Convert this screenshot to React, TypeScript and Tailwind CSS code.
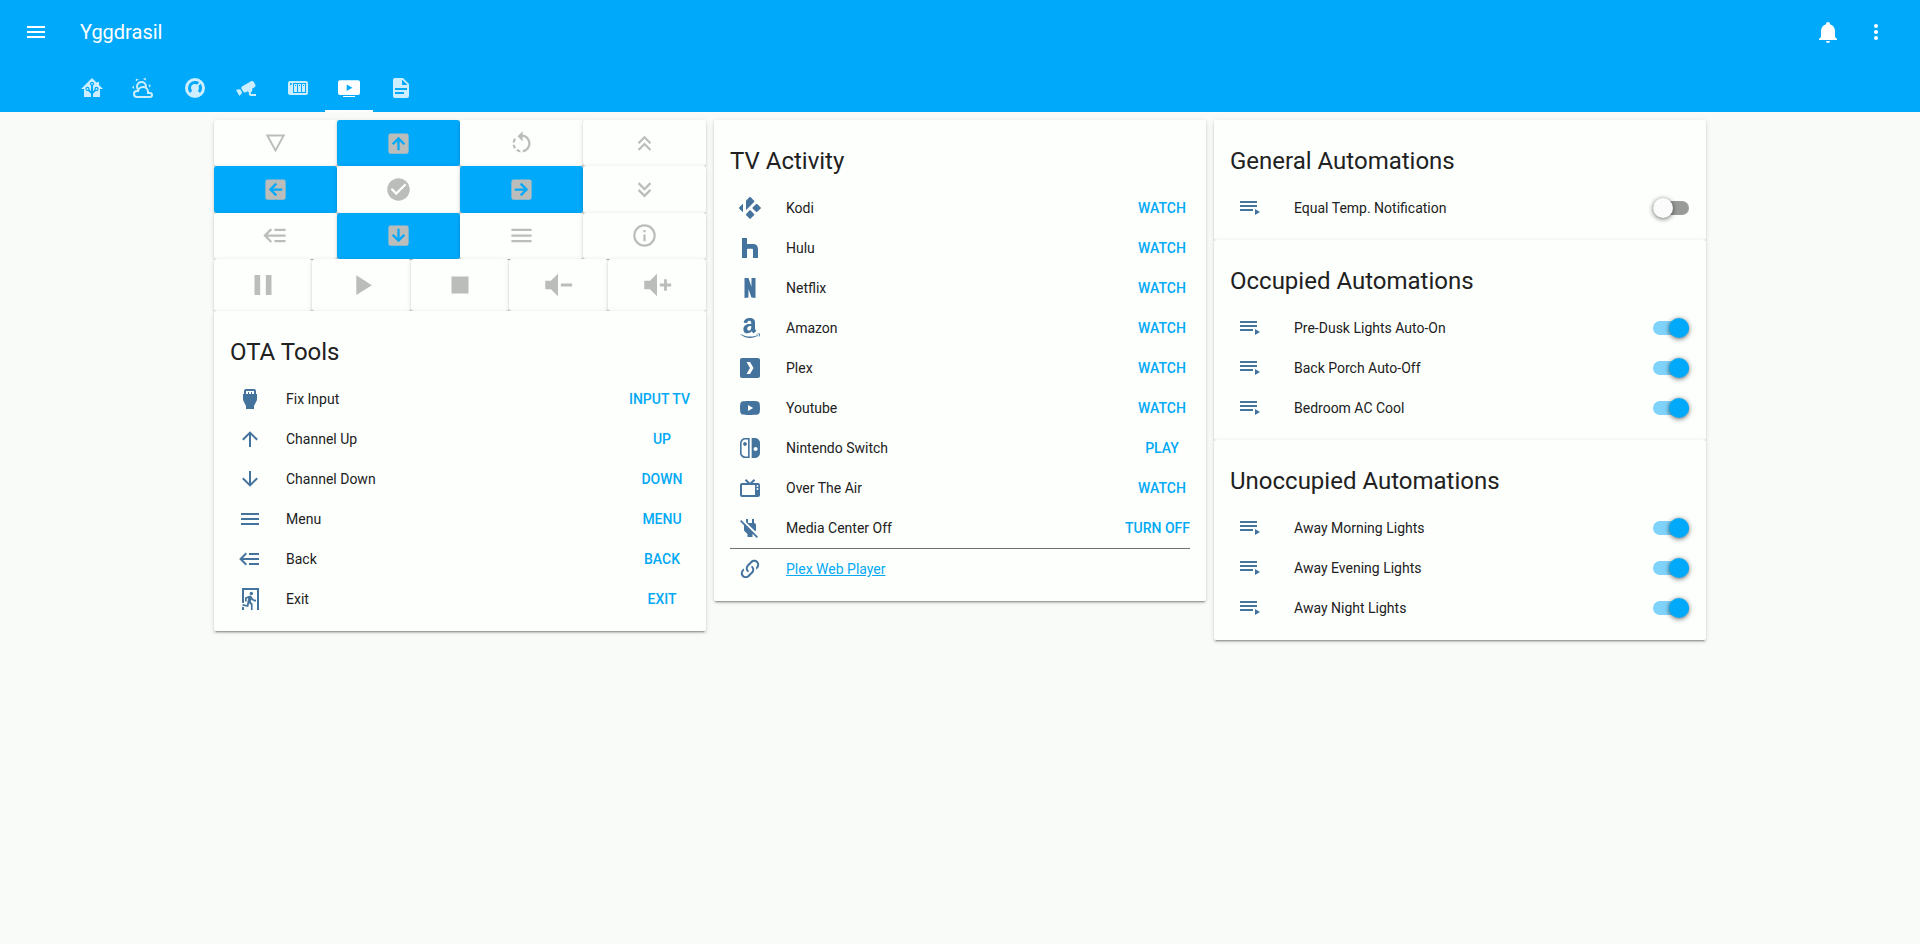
import React, { useId } from "react";

const ICONS = {
  menu: "M3,6H21V8H3V6M3,11H21V13H3V11M3,16H21V18H3V16Z",
  bell: "M21,19V20H3V19L5,17V11C5,7.9 7.03,5.17 10,4.29C10,4.19 10,4.1 10,4A2,2 0 0,1 12,2A2,2 0 0,1 14,4C14,4.1 14,4.19 14,4.29C16.97,5.17 19,7.9 19,11V17L21,19M14,21A2,2 0 0,1 12,23A2,2 0 0,1 10,21",
  dots: "M12,16A2,2 0 0,1 14,18A2,2 0 0,1 12,20A2,2 0 0,1 10,18A2,2 0 0,1 12,16M12,10A2,2 0 0,1 14,12A2,2 0 0,1 12,14A2,2 0 0,1 10,12A2,2 0 0,1 12,10M12,4A2,2 0 0,1 14,6A2,2 0 0,1 12,8A2,2 0 0,1 10,6A2,2 0 0,1 12,4Z",
  home: "M21.8,13H20V21H13V17.67L15.79,14.88L16.5,15C17.66,15 18.6,14.06 18.6,12.9C18.6,11.74 17.66,10.8 16.5,10.8A2.1,2.1 0 0,0 14.4,12.9L14.5,13.61L13,15.13V9.65C13.66,9.29 14.1,8.6 14.1,7.8A2.1,2.1 0 0,0 12,5.7A2.1,2.1 0 0,0 9.9,7.8C9.9,8.6 10.34,9.29 11,9.65V15.13L9.5,13.61L9.6,12.9A2.1,2.1 0 0,0 7.5,10.8A2.1,2.1 0 0,0 5.4,12.9A2.1,2.1 0 0,0 7.5,15L8.21,14.88L11,17.67V21H4V13H2.25C1.83,13 1.42,13 1.42,12.79C1.43,12.57 1.85,12.15 2.28,11.72L11,3C11.33,2.67 11.67,2.33 12,2.33C12.33,2.33 12.67,2.67 13,3L17,7V6H19V9L21.78,11.78C22.18,12.18 22.59,12.59 22.6,12.8C22.6,13 22.2,13 21.8,13M7.5,12A0.9,0.9 0 0,1 8.4,12.9A0.9,0.9 0 0,1 7.5,13.8A0.9,0.9 0 0,1 6.6,12.9A0.9,0.9 0 0,1 7.5,12M16.5,12C17,12 17.4,12.4 17.4,12.9C17.4,13.4 17,13.8 16.5,13.8A0.9,0.9 0 0,1 15.6,12.9A0.9,0.9 0 0,1 16.5,12M12,6.9C12.5,6.9 12.9,7.3 12.9,7.8C12.9,8.3 12.5,8.7 12,8.7C11.5,8.7 11.1,8.3 11.1,7.8C11.1,7.3 11.5,6.9 12,6.9Z",
  weather: "M12.74,5.47C15.1,6.5 16.35,9.03 15.92,11.46C17.19,12.56 18,14.19 18,16V16.17C18.31,16.06 18.65,16 19,16A3,3 0 0,1 22,19A3,3 0 0,1 19,22H6A4,4 0 0,1 2,18A4,4 0 0,1 6,14H6.27C5,12.45 4.6,10.24 5.5,8.26C6.72,5.5 9.97,4.24 12.74,5.47M11.93,7.3C10.16,6.5 8.09,7.31 7.31,9.07C6.85,10.09 6.93,11.22 7.41,12.13C8.5,10.83 10.16,10 12,10C12.7,10 13.38,10.12 14,10.34C13.94,9.06 13.18,7.86 11.93,7.3M13.55,3.64C13,3.4 12.45,3.23 11.88,3.12L14.37,1.82L15.27,4.71C14.76,4.29 14.19,3.93 13.55,3.64M6.09,4.44C5.6,4.79 5.17,5.19 4.8,5.63L4.91,2.82L7.87,3.5C7.25,3.71 6.65,4.03 6.09,4.44M18,9.71C17.91,9.12 17.78,8.55 17.59,8L19.97,9.5L17.92,11.73C18.03,11.08 18.05,10.4 18,9.71M3.04,11.3C3.11,11.9 3.24,12.47 3.43,13L1.06,11.5L3.1,9.28C3,9.93 2.97,10.61 3.04,11.3M19,18H16V16A4,4 0 0,0 12,12A4,4 0 0,0 8,16H6A2,2 0 0,0 4,18A2,2 0 0,0 6,20H19A1,1 0 0,0 20,19A1,1 0 0,0 19,18Z",
  thermostat: "M16.95,16.95L14.83,14.83C15.55,14.1 16,13.1 16,12C16,11.26 15.79,10.57 15.43,10L17.6,7.81C18.5,9 19,10.43 19,12C19,13.93 18.22,15.68 16.95,16.95M12,5C13.57,5 15,5.5 16.19,6.4L14,8.56C13.43,8.21 12.74,8 12,8A4,4 0 0,0 8,12C8,13.1 8.45,14.1 9.17,14.83L7.05,16.95C5.78,15.68 5,13.93 5,12A7,7 0 0,1 12,5M12,2A10,10 0 0,0 2,12A10,10 0 0,0 12,22A10,10 0 0,0 22,12A10,10 0 0,0 12,2Z",
  camera: "M18.15,4.94C17.77,4.91 17.37,5 17,5.2L8.35,10.2C7.39,10.76 7.07,12 7.62,12.94L9.12,15.53C9.67,16.5 10.89,16.82 11.85,16.27L13.65,15.23C13.92,15.69 14.32,16.06 14.81,16.27V18.04C14.81,19.13 15.7,20 16.81,20H22V18.04H16.81V16.27C17.72,15.87 18.31,14.97 18.31,14C18.31,13.54 18.19,13.11 17.97,12.73L20.5,11.27C21.47,10.71 21.8,9.5 21.24,8.53L19.74,5.94C19.4,5.34 18.79,5 18.15,4.94M6.22,13.17L2,13.87L2.75,15.17L4.75,18.63L5.5,19.93L8.22,16.63L6.22,13.17Z",
  nas: "M4,5A2,2 0 0,0 2,7V17A2,2 0 0,0 4,19H20A2,2 0 0,0 22,17V7A2,2 0 0,0 20,5H4M4,7H5.6V9H4V7M7,7H20V17H7V7M8,8V16H11V8H8M12,8V16H15V8H12M16,8V16H19V8H16M9,9H10V10H9V9M13,9H14V10H13V9M17,9H18V10H17V9Z",
  media: "M3,4.3A2,2 0 0,0 1,6.3V17A2,2 0 0,0 3,19H21A2,2 0 0,0 23,17V6.3A2,2 0 0,0 21,4.3H3M9.7,8.6L15.4,11.8L9.7,15V8.6M6,20H18V21H6V20Z",
  doc: "M13,9H18.5L13,3.5V9M6,2H14L20,8V20A2,2 0 0,1 18,22H6C4.89,22 4,21.1 4,20V4C4,2.89 4.89,2 6,2M15,18V16H6V18H15M18,14V12H6V14H18Z",
  nabla: "M3.3,4H20.7L12,20L3.3,4M6.2,5.8L12,16.4L17.8,5.8H6.2Z",
  boxUp: "M21,19A2,2 0 0,1 19,21H5A2,2 0 0,1 3,19V5A2,2 0 0,1 5,3H19A2,2 0 0,1 21,5V19M13,18V9.9L16.5,13.42L17.92,12L12,6.08L6.08,12L7.5,13.42L11,9.9V18H13Z",
  rotate: "M13,4.07V1L8.45,5.55L13,10V6.09C15.84,6.57 18,9.03 18,12C18,14.97 15.84,17.43 13,17.91V19.93C16.95,19.44 20,16.08 20,12C20,7.92 16.95,4.56 13,4.07M7.1,18.32C8.26,19.22 9.61,19.76 11,19.93V17.9C10.13,17.75 9.29,17.41 8.54,16.87L7.1,18.32M6.09,13H4.07C4.24,14.39 4.79,15.73 5.69,16.89L7.1,15.47C6.58,14.72 6.23,13.88 6.09,13M7.11,8.53L5.7,7.11C4.8,8.27 4.24,9.61 4.07,11H6.09C6.23,10.13 6.58,9.28 7.11,8.53Z",
  doubleUp: "M7.41,18.41L6,17L12,11L18,17L16.59,18.41L12,13.83L7.41,18.41M7.41,12.41L6,11L12,5L18,11L16.59,12.41L12,7.83L7.41,12.41Z",
  doubleDown: "M16.59,5.59L18,7L12,13L6,7L7.41,5.59L12,10.17L16.59,5.59M16.59,11.59L18,13L12,19L6,13L7.41,11.59L12,16.17L16.59,11.59Z",
  check: "M12,2C6.5,2 2,6.5 2,12S6.5,22 12,22 22,17.5 22,12 17.5,2 12,2M10,17L5,12L6.41,10.59L10,14.17L17.59,6.58L19,8L10,17Z",
  back: "M5,13L9,17L7.6,18.42L1.18,12L7.6,5.58L9,7L5,11H21V13H5M21,6V8H11V6H21M21,16V18H11V16H21Z",
  info: "M11,9H13V7H11M12,20C7.59,20 4,16.41 4,12C4,7.59 7.59,4 12,4C16.41,4 20,7.59 20,12C20,16.41 16.41,20 12,20M12,2A10,10 0 0,0 2,12A10,10 0 0,0 12,22A10,10 0 0,0 22,12A10,10 0 0,0 12,2M11,17H13V11H11V17Z",
  pause: "M14,19H18V5H14M6,19H10V5H6V19Z",
  play: "M8,5.14V19.14L19,12.14L8,5.14Z",
  stop: "M18,18H6V6H18V18Z",
  volDown: "M3,9H7L12,4V20L7,15H3V9M14,11H22V13H14V11Z",
  volUp: "M3,9H7L12,4V20L7,15H3V9M14,11H17V8H19V11H22V13H19V16H17V13H14V11Z",
  hdmi: "M18,7V4A2,2 0 0,0 16,2H8A2,2 0 0,0 6,4V7H5V13L8,19V22H16V19L19,13V7H18M8,4H16V7H14V5H13V7H11V5H10V7H8V4Z",
  up: "M13,20H11V8L5.5,13.5L4.08,12.08L12,4.16L19.92,12.08L18.5,13.5L13,8V20Z",
  down: "M11,4H13V16L18.5,10.5L19.92,11.92L12,19.84L4.08,11.92L5.5,10.5L11,16V4Z",
  exit: "M13.34,8.17C12.41,8.17 11.65,7.4 11.65,6.47A1.69,1.69 0 0,1 13.34,4.78C14.28,4.78 15.04,5.54 15.04,6.47C15.04,7.4 14.28,8.17 13.34,8.17M10.3,19.93L4.37,18.75L4.71,17.05L8.86,17.9L10.21,11.04L8.69,11.64V14.5H7V10.54L11.4,8.67L12.07,8.59C12.67,8.59 13.17,8.93 13.5,9.44L14.36,10.79C15.04,12 16.39,12.82 18,12.82V14.5C16.14,14.5 14.44,13.67 13.34,12.4L12.84,14.94L14.61,16.63V23H12.92V17.9L11.14,16.21L10.3,19.93M21,23H19V3H6V16.11L4,15.69V1H21V23M6,23H4V19.78L6,20.2V23Z",
  kodi: "M12,1C11.7,1 11.5,1.1 11.3,1.3L8.4,4.2C8.1,4.5 8,4.8 8,5.2V13.2C8,13.8 8.3,13.9 8.7,13.5L16.1,6C16.5,5.6 16.5,5.2 16.1,4.8L12.7,1.3C12.5,1.1 12.3,1 12,1M4.8,8C4.6,8 4.5,8.1 4.3,8.3L1.3,11.3C0.9,11.7 0.9,12.3 1.3,12.7L4.3,15.7C4.7,16.1 5,16 5,15.4V8.5C5,8.2 5,8 4.8,8M18.6,7.9C18.3,7.9 18,8 17.8,8.2L14.6,11.4C14.2,11.8 14.2,12.2 14.6,12.6L17.9,15.8C18.3,16.2 18.8,16.2 19.2,15.8L22.7,12.5C23.1,12.1 23.1,11.8 22.7,11.4L19.4,8.2C19.2,8 18.9,7.9 18.6,7.9M12.1,14.3C11.8,14.3 11.6,14.4 11.4,14.6L8.2,17.9C7.8,18.3 7.8,18.8 8.2,19.2L11.5,22.6C11.9,23 12.3,23 12.7,22.6L16,19.2C16.4,18.8 16.4,18.3 16,17.9L12.8,14.6C12.6,14.4 12.4,14.3 12.1,14.3Z",
  hulu: "M4,2H9V8.3C9.5,8.1 10.2,8 11,8H15C18.2,8 20,9.9 20,13V22H15V14.2C15,13.3 14.6,12.8 13.8,12.8H10.2C9.4,12.8 9,13.3 9,14.2V22H4V2Z",
  netflix: "M6.5,2H10.5L13.44,10.83L13.5,2H17.5V22C16.25,21.78 14.87,21.64 13.41,21.58L10.5,13L10.43,21.59C9.03,21.65 7.7,21.79 6.5,22V2Z",
  amazon: "M15.93,17.09C15.75,17.25 15.5,17.26 15.3,17.15C14.41,16.41 14.25,16.07 13.76,15.36C12.29,16.86 11.25,17.31 9.34,17.31C7.09,17.31 5.33,15.92 5.33,13.14C5.33,10.96 6.5,9.5 8.19,8.76C9.65,8.12 11.68,8 13.23,7.83V7.5C13.23,6.84 13.28,6.09 12.9,5.54C12.58,5.05 11.95,4.84 11.4,4.84C10.38,4.84 9.47,5.37 9.25,6.45C9.2,6.69 9,6.93 8.78,6.94L6.18,6.66C5.96,6.61 5.72,6.44 5.78,6.1C6.38,2.95 9.23,2 11.78,2C13.08,2 14.78,2.35 15.81,3.33C17.11,4.55 17,6.18 17,7.95V12.12C17,13.37 17.5,13.93 18,14.6C18.17,14.85 18.21,15.14 18,15.31L15.94,17.09H15.93M13.23,10.56V10C11.29,10 9.24,10.39 9.24,12.67C9.24,13.83 9.85,14.62 10.87,14.62C11.63,14.62 12.3,14.15 12.73,13.4C13.25,12.47 13.23,11.6 13.23,10.56M20.16,19.54C18,21.14 14.82,22 12.1,22C8.29,22 4.85,20.59 2.25,18.24C2.05,18.06 2.23,17.81 2.5,17.95C5.28,19.58 8.75,20.56 12.33,20.56C14.74,20.56 17.4,20.06 19.84,19.03C20.21,18.87 20.5,19.27 20.16,19.54M21.07,18.5C20.79,18.14 19.22,18.33 18.5,18.42C18.31,18.44 18.28,18.26 18.47,18.12C19.71,17.24 21.76,17.5 22,17.79C22.24,18.09 21.93,20.14 20.76,21.11C20.58,21.27 20.41,21.18 20.5,21C20.76,20.33 21.35,18.86 21.07,18.5Z",
  plex: "M4,2C2.89,2 2,2.89 2,4V20C2,21.11 2.89,22 4,22H20C21.11,22 22,21.11 22,20V4C22,2.89 21.11,2 20,2H4M8.56,6H12.06L15.5,12L12.06,18H8.56L12,12L8.56,6Z",
  youtube: "M10,15L15.19,12L10,9V15M21.56,7.17C21.69,7.64 21.78,8.27 21.84,9.07C21.91,9.87 21.94,10.56 21.94,11.16L22,12C22,14.19 21.84,15.8 21.56,16.83C21.31,17.73 20.73,18.31 19.83,18.56C19.36,18.69 18.5,18.78 17.18,18.84C15.88,18.91 14.69,18.94 13.59,18.94L12,19C7.81,19 5.2,18.84 4.17,18.56C3.27,18.31 2.69,17.73 2.44,16.83C2.31,16.36 2.22,15.73 2.16,14.93C2.09,14.13 2.06,13.44 2.06,12.84L2,12C2,9.81 2.16,8.2 2.44,7.17C2.69,6.27 3.27,5.69 4.17,5.44C4.64,5.31 5.5,5.22 6.82,5.16C8.12,5.09 9.31,5.06 10.41,5.06L12,5C16.19,5 18.8,5.16 19.83,5.44C20.73,5.69 21.31,6.27 21.56,7.17Z",
  nintendo: "M10.04,20.4H7.12C6.19,20.4 5.3,20 4.64,19.36C4,18.7 3.6,17.81 3.6,16.88V7.12C3.6,6.19 4,5.3 4.64,4.64C5.3,4 6.19,3.62 7.12,3.62H10.04V20.4M7.12,2A5.12,5.12 0 0,0 2,7.12V16.88C2,19.71 4.29,22 7.12,22H11.65V2H7.12M5.11,8C5.11,9.04 5.95,9.88 7,9.88C8.03,9.88 8.87,9.04 8.87,8C8.87,6.96 8.03,6.12 7,6.12C5.95,6.12 5.11,6.96 5.11,8M17.61,11C18.72,11 19.62,11.89 19.62,13C19.62,14.12 18.72,15 17.61,15C16.5,15 15.58,14.12 15.58,13C15.58,11.89 16.5,11 17.61,11M16.88,22A5.12,5.12 0 0,0 22,16.88V7.12C22,4.29 19.71,2 16.88,2H13.65V22H16.88Z",
  tv: "M8.16,3L6.75,4.41L9.34,7H4C2.89,7 2,7.89 2,9V19C2,20.11 2.89,21 4,21H20C21.11,21 22,20.11 22,19V9C22,7.89 21.11,7 20,7H14.66L17.25,4.41L15.84,3L12,6.84L8.16,3M4,9H17V19H4V9M19.5,9A1,1 0 0,1 20.5,10A1,1 0 0,1 19.5,11A1,1 0 0,1 18.5,10A1,1 0 0,1 19.5,9M19.5,12A1,1 0 0,1 20.5,13A1,1 0 0,1 19.5,14A1,1 0 0,1 18.5,13A1,1 0 0,1 19.5,12Z",
  plugOff: "M8,3V6.18L17.2,15.3L18,14.4V8.8C18,7.7 17,6.9 16,6.9V3H14V7H10V3H8M3.28,4L2,5.27L6,9.27V14.5L9.5,18V21H14.5V18L14.73,18L18.73,22L20,20.72L3.28,4Z",
  link: "M10.59,13.41C11,13.8 11,14.44 10.59,14.83C10.2,15.22 9.56,15.22 9.17,14.83C7.22,12.88 7.22,9.71 9.17,7.76V7.76L12.71,4.22C14.66,2.27 17.83,2.27 19.78,4.22C21.73,6.17 21.73,9.34 19.78,11.29L18.29,12.78C18.3,11.96 18.17,11.14 17.89,10.36L18.36,9.88C19.54,8.71 19.54,6.81 18.36,5.64C17.19,4.46 15.29,4.46 14.12,5.64L10.59,9.17C9.41,10.34 9.41,12.24 10.59,13.41M13.41,9.17C13.8,8.78 14.44,8.78 14.83,9.17C16.78,11.12 16.78,14.29 14.83,16.24V16.24L11.29,19.78C9.34,21.73 6.17,21.73 4.22,19.78C2.27,17.83 2.27,14.66 4.22,12.71L5.71,11.22C5.7,12.04 5.83,12.86 6.11,13.65L5.64,14.12C4.46,15.29 4.46,17.19 5.64,18.36C6.81,19.54 8.71,19.54 9.88,18.36L13.41,14.83C14.59,13.66 14.59,11.76 13.41,10.59C13,10.2 13,9.56 13.41,9.17Z",
  playlist: "M19,9H2V11H19V9M19,5H2V7H19V5M2,15H15V13H2V15M17,13V19L22,16L17,13Z",
};

type IconName = keyof typeof ICONS;

function Icon({ name, className = "size-6" }: { name: IconName; className?: string }) {
  return (
    <svg viewBox="0 0 24 24" fill="currentColor" fillRule="evenodd" aria-hidden="true" className={className}>
      <path d={ICONS[name]} />
    </svg>
  );
}

const TABS: { icon: IconName; label: string }[] = [
  { icon: "home", label: "Home" },
  { icon: "weather", label: "Weather" },
  { icon: "thermostat", label: "Climate" },
  { icon: "camera", label: "Cameras" },
  { icon: "nas", label: "Server" },
  { icon: "media", label: "Media" },
  { icon: "doc", label: "Log" },
];

type Key = { icon: IconName; label: string; filled?: boolean; turn?: string };

const REMOTE_KEYS: Key[] = [
  { icon: "nabla", label: "Options" },
  { icon: "boxUp", label: "Up", filled: true },
  { icon: "rotate", label: "Replay" },
  { icon: "doubleUp", label: "Page up" },
  { icon: "boxUp", label: "Left", filled: true, turn: "-rotate-90" },
  { icon: "check", label: "Select" },
  { icon: "boxUp", label: "Right", filled: true, turn: "rotate-90" },
  { icon: "doubleDown", label: "Page down" },
  { icon: "back", label: "Back" },
  { icon: "boxUp", label: "Down", filled: true, turn: "rotate-180" },
  { icon: "menu", label: "Menu" },
  { icon: "info", label: "Info" },
];

const MEDIA_KEYS: Key[] = [
  { icon: "pause", label: "Pause" },
  { icon: "play", label: "Play" },
  { icon: "stop", label: "Stop" },
  { icon: "volDown", label: "Volume down" },
  { icon: "volUp", label: "Volume up" },
];

type Action = { icon: IconName; name: string; action: string };

const OTA_TOOLS: Action[] = [
  { icon: "hdmi", name: "Fix Input", action: "Input TV" },
  { icon: "up", name: "Channel Up", action: "Up" },
  { icon: "down", name: "Channel Down", action: "Down" },
  { icon: "menu", name: "Menu", action: "Menu" },
  { icon: "back", name: "Back", action: "Back" },
  { icon: "exit", name: "Exit", action: "Exit" },
];

const TV_ACTIVITIES: Action[] = [
  { icon: "kodi", name: "Kodi", action: "Watch" },
  { icon: "hulu", name: "Hulu", action: "Watch" },
  { icon: "netflix", name: "Netflix", action: "Watch" },
  { icon: "amazon", name: "Amazon", action: "Watch" },
  { icon: "plex", name: "Plex", action: "Watch" },
  { icon: "youtube", name: "Youtube", action: "Watch" },
  { icon: "nintendo", name: "Nintendo Switch", action: "Play" },
  { icon: "tv", name: "Over The Air", action: "Watch" },
  { icon: "plugOff", name: "Media Center Off", action: "Turn off" },
];

const AUTOMATIONS = [
  { title: "General Automations", items: [{ name: "Equal Temp. Notification", on: false }] },
  {
    title: "Occupied Automations",
    items: [
      { name: "Pre-Dusk Lights Auto-On", on: true },
      { name: "Back Porch Auto-Off", on: true },
      { name: "Bedroom AC Cool", on: true },
    ],
  },
  {
    title: "Unoccupied Automations",
    items: [
      { name: "Away Morning Lights", on: true },
      { name: "Away Evening Lights", on: true },
      { name: "Away Night Lights", on: true },
    ],
  },
];

const SHADOW =
  "shadow-[0_2px_2px_0_rgba(0,0,0,0.14),0_1px_5px_0_rgba(0,0,0,0.12),0_3px_1px_-2px_rgba(0,0,0,0.2)]";

function Card({ title, children }: { title: string; children: React.ReactNode }) {
  return (
    <section className={`rounded-xs bg-[#fdfffd] p-4 ${SHADOW}`}>
      <h2 className="pt-[5px] pb-[11px] text-2xl/10 font-normal">{title}</h2>
      <div className="flex flex-col gap-2">{children}</div>
    </section>
  );
}

function RowIcon({ name }: { name: IconName }) {
  return (
    <span className="flex w-10 shrink-0 justify-center text-[#44739e]">
      <Icon name={name} />
    </span>
  );
}

function ActionRow({ icon, name, action }: Action) {
  return (
    <div className="flex h-8 items-center">
      <RowIcon name={icon} />
      <span className="ml-4 flex-1 truncate">{name}</span>
      <button
        type="button"
        aria-label={`${name}: ${action}`}
        className="-mr-2 min-w-18 px-2 py-1 text-center font-medium text-[#03a9f4] uppercase"
      >
        {action}
      </button>
    </div>
  );
}

function ToggleRow({ name, on }: { name: string; on: boolean }) {
  const id = useId();
  return (
    <div className="flex h-8 items-center">
      <RowIcon name="playlist" />
      <label htmlFor={id} className="ml-6 flex-1 truncate">
        {name}
      </label>
      <input
        id={id}
        type="checkbox"
        role="switch"
        defaultChecked={on}
        className="relative mr-px h-3.5 w-9 shrink-0 appearance-none rounded-full bg-[#999b98] before:absolute before:-top-[3px] before:left-0 before:size-5 before:rounded-full before:bg-[#fafbfa] before:shadow-[0_1px_5px_0_rgba(0,0,0,0.6)] before:content-[''] checked:bg-[#7fd3fb] checked:before:left-4 checked:before:bg-[#01a9fb]"
      />
    </div>
  );
}

function KeyButton({ k, iconSize }: { k: Key; iconSize: string }) {
  return (
    <button
      type="button"
      aria-label={k.label}
      className={`flex items-center justify-center rounded-[3px] text-[#bbbdba] ${k.filled ? "bg-[#01a9fb]" : "bg-[#fdfffd]"} ${SHADOW}`}
    >
      <Icon name={k.icon} className={`${iconSize} ${k.turn ?? ""}`} />
    </button>
  );
}

export default function App() {
  return (
    <div className="min-h-screen bg-[#f9fbf8] font-[Roboto,sans-serif] text-sm/5 text-[#212121]">
      <header className="bg-[#01a9fb] text-white">
        <div className="flex h-16 items-center px-6">
          <button type="button" aria-label="Open menu">
            <Icon name="menu" />
          </button>
          <h1 className="ml-8 flex-1 text-xl font-normal">Yggdrasil</h1>
          <div className="flex gap-6 pr-2">
            <button type="button" aria-label="Notifications">
              <Icon name="bell" />
            </button>
            <button type="button" aria-label="More options">
              <Icon name="dots" />
            </button>
          </div>
        </div>
        <nav aria-label="Views" className="h-12 pl-17">
          {TABS.map((tab) => (
            <React.Fragment key={tab.label}>
              <a
                href={`#${tab.label.toLowerCase()}`}
                aria-label={tab.label}
                aria-current={tab.label === "Media" ? "page" : undefined}
                className={`inline-flex h-12 w-12 items-center justify-center border-y-2 border-t-transparent align-top ${
                  tab.label === "Media" ? "border-b-white" : "border-b-transparent text-white/80"
                }`}
              >
                <Icon name={tab.icon} />
              </a>{" "}
            </React.Fragment>
          ))}
        </nav>
      </header>

      <main className="mx-auto grid max-w-[1500px] grid-cols-3 items-start gap-2 px-1 pt-2">
        <div className="flex flex-col">
          <div className="grid h-[139px] grid-cols-4 grid-rows-3">
            {REMOTE_KEYS.map((k) => (
              <KeyButton key={k.label} k={k} iconSize="size-[27px]" />
            ))}
          </div>
          <div className="grid h-[52px] grid-cols-5">
            {MEDIA_KEYS.map((k) => (
              <KeyButton key={k.label} k={k} iconSize="size-[34px]" />
            ))}
          </div>
          <Card title="OTA Tools">
            {OTA_TOOLS.map((row) => (
              <ActionRow key={row.name} {...row} />
            ))}
          </Card>
        </div>

        <Card title="TV Activity">
          {TV_ACTIVITIES.map((row) => (
            <ActionRow key={row.name} {...row} />
          ))}
          <div className="-mt-1 border-t border-[#6f716f] pt-1">
            <div className="flex h-8 items-center">
              <RowIcon name="link" />
              <a href="#plex-web" className="ml-4 text-[#03a9f4] underline">
                Plex Web Player
              </a>
            </div>
          </div>
        </Card>

        <div className="flex flex-col">
          {AUTOMATIONS.map((group) => (
            <Card key={group.title} title={group.title}>
              {group.items.map((item) => (
                <ToggleRow key={item.name} {...item} />
              ))}
            </Card>
          ))}
        </div>
      </main>
    </div>
  );
}
